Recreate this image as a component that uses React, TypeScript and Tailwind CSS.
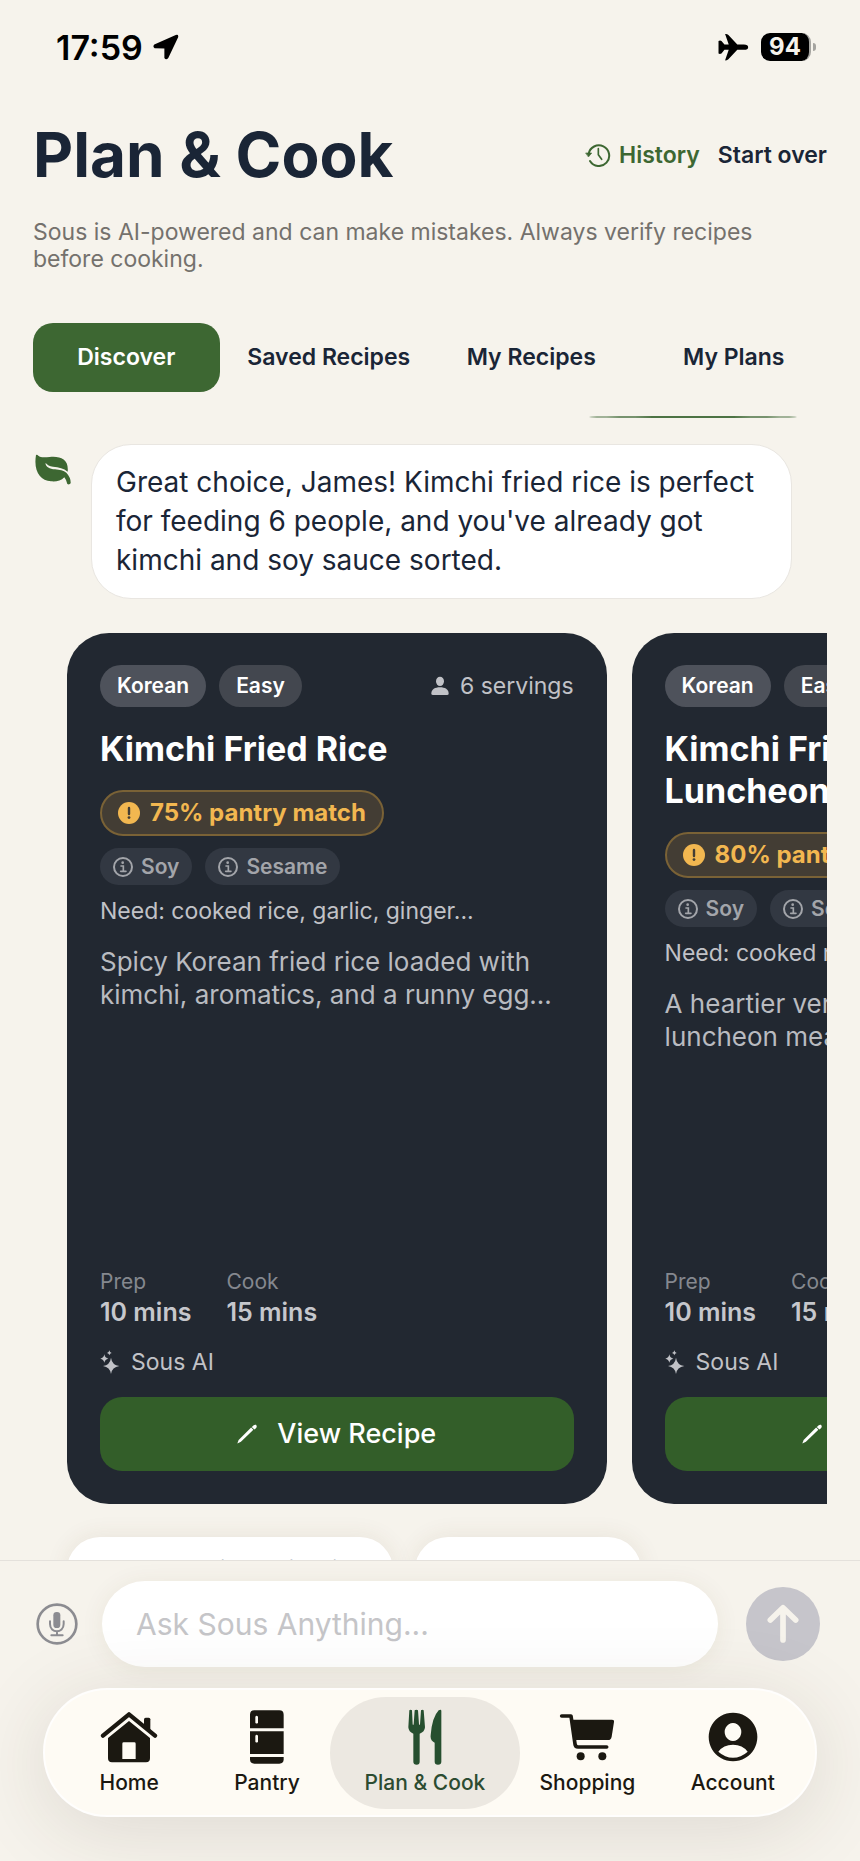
import { useState, type ReactNode } from 'react';
import { clsx } from 'clsx';

type Recipe = {
  id: string;
  title: string;
  match: number;
  need: string;
  description: string;
};

const TABS = ['Discover', 'Saved Recipes', 'My Recipes', 'My Plans'];

const RECIPES: Recipe[] = [
  {
    id: 'kimchi-fried-rice',
    title: 'Kimchi Fried Rice',
    match: 75,
    need: 'cooked rice, garlic, ginger...',
    description: 'Spicy Korean fried rice loaded with kimchi, aromatics, and a runny egg...',
  },
  {
    id: 'kimchi-luncheon',
    title: 'Kimchi Fried Rice with Luncheon Meat',
    match: 80,
    need: 'cooked rice, garlic, onion...',
    description: 'A heartier version with crispy luncheon meat and kimchi...',
  },
];

// ─── Icons ────────────────────────────────────────────────────────────────────

function LocationIcon() {
  return (
    <svg className="w-[26px] h-[26px]" viewBox="456 103 80 78" fill="currentColor" aria-hidden="true">
      <path d="M526 105 Q536 102 533 113 L503 176 Q496 184 491 176 L491 147 L461 146 Q454 140 460 134 Z" />
    </svg>
  );
}

function PlaneIcon() {
  return (
    <svg className="w-[31px] h-[28px]" viewBox="860 98 93 85" fill="currentColor" aria-hidden="true">
      <path d="M951 141 q0 8 -13 8 H918 L891 178 Q887 182 881 181 L892 149 H879 L870 160 Q865 163 861 160 V122 Q866 119 870 122 L879 133 H892 L881 101 Q887 100 891 104 L918 133 H938 q13 0 13 8 Z" />
    </svg>
  );
}

function HistoryIcon() {
  return (
    <svg className="w-[26px] h-[24px]" viewBox="451 430 78 72" fill="none" stroke="currentColor" strokeWidth="6" strokeLinecap="round" strokeLinejoin="round" aria-hidden="true">
      <path d="M462 463 A31 31 0 1 1 466 484" />
      <path d="M454 460 H471 L462 471 Z" fill="currentColor" strokeWidth="2" />
      <path d="M491 447 V465 L501 479" strokeWidth="5" />
    </svg>
  );
}

function LeafIcon() {
  return (
    <svg className="w-[36px] h-[31px]" viewBox="106 461 108 93" aria-hidden="true">
      <path
        className="fill-[#3d6732]"
        d="M109 464 Q112 461 116 466 C122 472 134 471 150 470 C182 467 208 476 204 514 C192 504 178 500 160 499 C149 498 143 494 138 488 C136 498 149 506 166 507 C180 508 192 511 200 517 Q214 532 213 549 Q209 554 203 551 Q201 540 194 531 C184 542 170 544 154 543 C121 540 101 512 109 464 Z"
      />
    </svg>
  );
}

function PersonIcon() {
  return (
    <svg className="w-[18px] h-[20px]" viewBox="0 0 54 60" fill="currentColor" aria-hidden="true">
      <ellipse cx="27" cy="16" rx="12" ry="14" />
      <path d="M1 53 C1 40 12 34 27 34 C42 34 53 40 53 53 Q53 57 48 57 H6 Q1 57 1 53 Z" />
    </svg>
  );
}

function AlertIcon() {
  return (
    <svg className="size-[22px]" viewBox="0 0 22 22" aria-hidden="true">
      <circle cx="11" cy="11" r="11" fill="currentColor" />
      <path d="M11 6v6" stroke="#433d34" strokeWidth="2.4" strokeLinecap="round" />
      <circle cx="11" cy="15.6" r="1.4" fill="#433d34" />
    </svg>
  );
}

function InfoIcon() {
  return (
    <svg className="size-5" viewBox="0 0 60 60" fill="none" stroke="currentColor" aria-hidden="true">
      <circle cx="30" cy="30" r="27" strokeWidth="6" />
      <circle cx="29" cy="17" r="4" fill="currentColor" stroke="none" />
      <path d="M24 27 H31 V43 M23 43 H39" strokeWidth="5" strokeLinecap="round" />
    </svg>
  );
}

function SparklesIcon() {
  return (
    <svg className="w-[20px] h-[24px]" viewBox="154 331 60 72" fill="currentColor" aria-hidden="true">
      <path d="M187 354 Q190 376 212 379 Q190 382 187 403 Q184 382 163 379 Q184 376 187 354 Z" />
      <path d="M167 344 Q169 355 179 357 Q169 359 167 369 Q165 359 155 357 Q165 355 167 344 Z" />
      <path d="M182 332 Q183 339 189 340 Q183 341 182 347 Q181 341 175 340 Q181 339 182 332 Z" />
    </svg>
  );
}

function PencilIcon() {
  return (
    <svg className="size-5" viewBox="568 553 61 60" fill="currentColor" aria-hidden="true">
      <path d="M569 612 L573 601 L611 563 L618 570 L580 607 Z" />
      <path d="M615 560 Q620 553 626 555 Q631 561 625 566 L621 569 L613 562 Z" />
    </svg>
  );
}

function MicIcon() {
  return (
    <svg className="size-[42px]" viewBox="110 189 126 126" fill="none" stroke="currentColor" strokeLinecap="round" aria-hidden="true">
      <circle cx="173" cy="252" r="58" strokeWidth="8" />
      <rect x="162" y="216" width="21" height="48" rx="10" fill="currentColor" stroke="none" />
      <path d="M152 244 V252 C152 281 193 281 193 252 V244 M173 275 V286 M156 286 H190" strokeWidth="6" />
    </svg>
  );
}

function ArrowUpIcon() {
  return (
    <svg className="w-[32px] h-[40px]" viewBox="0 0 96 120" fill="none" stroke="currentColor" strokeWidth="17" strokeLinecap="round" strokeLinejoin="round" aria-hidden="true">
      <path d="M48 108 V12 M10 48 L48 11 L86 48" />
    </svg>
  );
}

function HomeIcon() {
  return (
    <svg className="w-[58px] h-[54px]" viewBox="297 513 174 162" aria-hidden="true">
      <path d="M306 590 L384 526 L462 590" fill="none" stroke="currentColor" strokeWidth="13" strokeLinecap="round" strokeLinejoin="round" />
      <path d="M429 541 q0 -5 5 -5 h9 q5 0 5 5 V578 L429 562 Z" fill="currentColor" />
      <path
        fill="currentColor"
        fillRule="evenodd"
        d="M384 546 L447 597 V658 q0 12 -12 12 H333 q-12 0 -12 -12 V597 Z M368 610 q-4 0 -4 4 V660 H404 V614 q0 -4 -4 -4 Z"
      />
    </svg>
  );
}

function FridgeIcon() {
  return (
    <svg className="w-[36px] h-[54px]" viewBox="750 515 108 162" fill="currentColor" fillRule="evenodd" aria-hidden="true">
      <path d="M753 570 V529 q0 -13 13 -13 h75 q13 0 13 13 V570 Z M769 535 v18 q4 5 8 0 v-18 q-4 -5 -8 0 Z" />
      <path d="M753 579 H854 V647 H753 Z M769 592 v18 q4 5 8 0 v-18 q-4 -5 -8 0 Z" />
      <path d="M753 656 H854 v7 q0 13 -13 13 h-75 q-13 0 -13 -13 Z" />
    </svg>
  );
}

function CutleryIcon() {
  return (
    <svg className="w-[34px] h-[56px] text-[#264f2f]" viewBox="1222 505 102 168" fill="currentColor" aria-hidden="true">
      <path d="M1226 509 q4 -4 8 0 L1236 551 q1 4 3 0 L1242 509 q5 -4 10 0 L1255 551 q2 4 3 0 L1261 509 q4 -4 8 0 L1273 560 Q1272 574 1257 579 V663 q0 9 -9 9 q-10 0 -10 -9 V579 Q1224 574 1223 560 Z" />
      <path d="M1322 511 V663 q0 9 -10 9 q-10 0 -10 -9 V606 Q1288 600 1290 584 Q1294 530 1314 509 Q1322 504 1322 511 Z" />
    </svg>
  );
}

function CartIcon() {
  return (
    <svg className="w-[56px] h-[48px]" viewBox="388 527 168 144" fill="currentColor" aria-hidden="true">
      <path d="M396 536 H424 L436 620 q1 9 9 9 H531" fill="none" stroke="currentColor" strokeWidth="11" strokeLinecap="round" strokeLinejoin="round" />
      <path d="M428 547 H547 q7 0 6 7 L546 598 q-2 10 -11 10 H436 Z" />
      <circle cx="453" cy="657" r="12" />
      <circle cx="518" cy="657" r="12" />
    </svg>
  );
}

function AccountIcon() {
  return (
    <svg className="w-[50px] h-[50px]" viewBox="826 520 150 150" fill="currentColor" fillRule="evenodd" aria-hidden="true">
      <path d="M901 522 a73 73 0 1 0 0.1 0 Z M901 553 a25 27 0 1 1 -0.1 0 Z M857 639 Q872 618 901 618 Q930 618 945 639 Q925 657 901 657 Q877 657 857 639 Z" />
    </svg>
  );
}

// ─── Pieces ───────────────────────────────────────────────────────────────────

function StatusBar() {
  return (
    <div className="flex h-[94px] shrink-0 items-center justify-between pl-14 pr-[44px] text-black">
      <div className="flex items-center gap-2.5">
        <span className="text-[34px] font-semibold">17:59</span>
        <LocationIcon />
      </div>
      <div className="flex items-center gap-3">
        <PlaneIcon />
        <div className="flex items-center gap-0.5">
          <span className="flex h-7 w-[50px] items-center justify-center rounded-[9px] border-r-2 border-[#a5a4a0] bg-black text-2xl font-bold text-[#f6f3ec]">94</span>
          <span className="h-2 w-[3px] rounded-r-full bg-[#a5a4a0]" />
        </div>
      </div>
    </div>
  );
}

function Allergen({ name }: { name: string }) {
  return (
    <span className="flex h-[37px] items-center gap-2 rounded-full bg-[#323842] px-[13px] text-[21px] font-semibold text-[#a3a5aa]">
      <InfoIcon />
      {name}
    </span>
  );
}

function Stat({ label, value }: { label: string; value: string }) {
  return (
    <div>
      <p className="text-[21px] leading-7 text-[#85888f]">{label}</p>
      <p className="text-[25px] leading-[33px] font-semibold text-[#c6c7cc]">{value}</p>
    </div>
  );
}

function RecipeCard({ recipe }: { recipe: Recipe }) {
  return (
    <article className="flex min-h-[871px] w-[71%] shrink-0 flex-col rounded-[42px] bg-[#222831] p-[33px] pt-8">
      <div className="flex items-center justify-between">
        <div className="flex gap-[13px] text-[21px] font-semibold text-white">
          <span className="flex h-[42px] items-center rounded-full bg-[#4e525b] px-[17px]">Korean</span>
          <span className="flex h-[42px] items-center rounded-full bg-[#43474f] px-[17px]">Easy</span>
        </div>
        <span className="flex items-center gap-[11px] text-[23px] text-[#c1c2c7]">
          <PersonIcon />
          6 servings
        </span>
      </div>

      <h2 className="mt-[21px] text-[34px] leading-[42px] font-bold text-white">{recipe.title}</h2>

      <div className="mt-5 flex">
        <span className="flex h-[46px] items-center gap-2.5 rounded-full border-2 border-[#7a6236] bg-[#433d34] px-4 text-2xl font-bold text-[#f2b750]">
          <AlertIcon />
          {recipe.match}% pantry match
        </span>
      </div>

      <div className="mt-3 flex gap-[13px]">
        <Allergen name="Soy" />
        <Allergen name="Sesame" />
      </div>

      <p className="mt-3 text-[23px] leading-7 text-[#c1c2c7]">Need: {recipe.need}</p>
      <p className="mt-5 text-[26px] leading-[33px] text-[#b9bbc0]">{recipe.description}</p>

      <div className="mt-auto flex gap-[35px]">
        <Stat label="Prep" value="10 mins" />
        <Stat label="Cook" value="15 mins" />
      </div>
      <p className="mt-[19px] flex items-center gap-[11px] text-[23px] leading-7 text-[#c1c2c7]">
        <SparklesIcon />
        Sous AI
      </p>
      <button type="button" className="mt-[21px] flex h-[74px] shrink-0 items-center justify-center gap-5 rounded-[22px] bg-[#335e29] text-[27px] font-medium text-white">
        <PencilIcon />
        View Recipe
      </button>
    </article>
  );
}

function NavItem({ label, icon, active }: { label: string; icon: ReactNode; active?: boolean }) {
  return (
    <a
      href="#"
      aria-current={active ? 'page' : undefined}
      className={clsx(
        'flex h-28 flex-col items-center pt-3 text-[21px] leading-6 font-medium whitespace-nowrap',
        active ? '-mx-1.5 rounded-full bg-[#ece8e1] text-[#2c4c31]' : 'text-[#1b1811]',
      )}
    >
      <span className="flex h-14 items-center">{icon}</span>
      <span className="mt-1.5">{label}</span>
    </a>
  );
}

// ─── App ──────────────────────────────────────────────────────────────────────

export default function App() {
  const [tab, setTab] = useState('Discover');
  const [message, setMessage] = useState('');

  return (
    <div className="flex h-screen flex-col overflow-hidden bg-[#f6f3ec] font-['Inter','Liberation_Sans',sans-serif] text-[#1a2536]">
      <StatusBar />

      <header className="shrink-0 px-[33px] pt-[25px]">
        <div className="flex items-center justify-between">
          <h1 className="text-[62px] leading-[72px] font-bold">Plan &amp; Cook</h1>
          <div className="flex items-center gap-[18px] text-[23px] font-semibold">
            <button type="button" className="flex items-center gap-2 text-[#3d6732]">
              <HistoryIcon />
              History
            </button>
            <button type="button">Start over</button>
          </div>
        </div>
        <p className="mt-7 pr-10 text-[23px] leading-[27px] text-[#74716d]">
          Sous is AI-powered and can make mistakes. Always verify recipes before cooking.
        </p>
        <nav className="mt-[50px] grid grid-cols-4 gap-4">
          {TABS.map((name) => (
            <button
              key={name}
              type="button"
              onClick={() => setTab(name)}
              className={clsx(
                'h-[69px] rounded-[20px] text-[23px] font-semibold whitespace-nowrap',
                tab === name && 'bg-[#3d6732] text-white',
              )}
            >
              {name}
            </button>
          ))}
        </nav>
        <div className="mt-6 flex justify-end pr-[30px]">
          <span className="h-0.5 w-[208px] rounded-[50%] bg-[#4d7344]" />
        </div>
      </header>

      <main className="min-h-0 flex-1 overflow-hidden pt-[26px]">
        <div className="flex items-start gap-5 pr-[68px] pl-[35px]">
          <span className="shrink-0 pt-2.5">
            <LeafIcon />
          </span>
          <p className="flex-1 rounded-[40px] border border-[#e9e6e1] bg-white py-[18px] pr-5 pl-6 text-[28px] leading-[39px]">
            Great choice, James! Kimchi fried rice is perfect for feeding 6 people, and you've already got kimchi and soy sauce sorted.
          </p>
        </div>

        <div className="mt-[34px] mr-[33px] ml-[67px] flex gap-[25px] overflow-hidden">
          {RECIPES.map((recipe) => (
            <RecipeCard key={recipe.id} recipe={recipe} />
          ))}
        </div>

        <div className="mt-[33px] ml-[67px] flex gap-[22px] text-[26px]">
          <button type="button" className="h-[66px] w-[326px] rounded-[33px] bg-white shadow-[0_0_24px_rgba(90,70,30,0.09)]">Start cooking this dish</button>
          <button type="button" className="h-[66px] w-[226px] rounded-[33px] bg-white shadow-[0_0_24px_rgba(90,70,30,0.09)]">See more</button>
        </div>
      </main>

      <footer className="shrink-0 border-t border-[#e4e1dc] bg-[#f6f3ec] pt-5 pb-[44px]">
        <form className="flex items-center pr-10 pl-9" onSubmit={(e) => e.preventDefault()}>
          <button type="button" aria-label="Voice input" className="shrink-0 text-[#8c8c91]">
            <MicIcon />
          </button>
          <input
            aria-label="Ask Sous Anything"
            placeholder="Ask Sous Anything..."
            value={message}
            onChange={(e) => setMessage(e.target.value)}
            className="ml-6 h-[86px] min-w-0 flex-1 rounded-full bg-white px-[34px] text-[30px] shadow-[0_2px_24px_rgba(90,70,30,0.07)] outline-none placeholder:text-[#c5c5c8]"
          />
          <button type="submit" aria-label="Send" className="ml-7 flex size-[74px] shrink-0 items-center justify-center rounded-full bg-[#c6c5cb] text-[#f6f3ec]">
            <ArrowUpIcon />
          </button>
        </form>

        <nav className="relative mx-[43px] mt-[21px] grid h-[129px] grid-cols-[138fr_137fr_178fr_146fr_144fr] items-center rounded-[64px] border-2 border-white/80 bg-[#fefbf4] pr-2.5 pl-[15px] shadow-[0_12px_80px_rgba(60,50,30,0.13)]">
          <NavItem label="Home" icon={<HomeIcon />} />
          <NavItem label="Pantry" icon={<FridgeIcon />} />
          <NavItem label="Plan &amp; Cook" icon={<CutleryIcon />} active />
          <NavItem label="Shopping" icon={<CartIcon />} />
          <NavItem label="Account" icon={<AccountIcon />} />
        </nav>
      </footer>
    </div>
  );
}
